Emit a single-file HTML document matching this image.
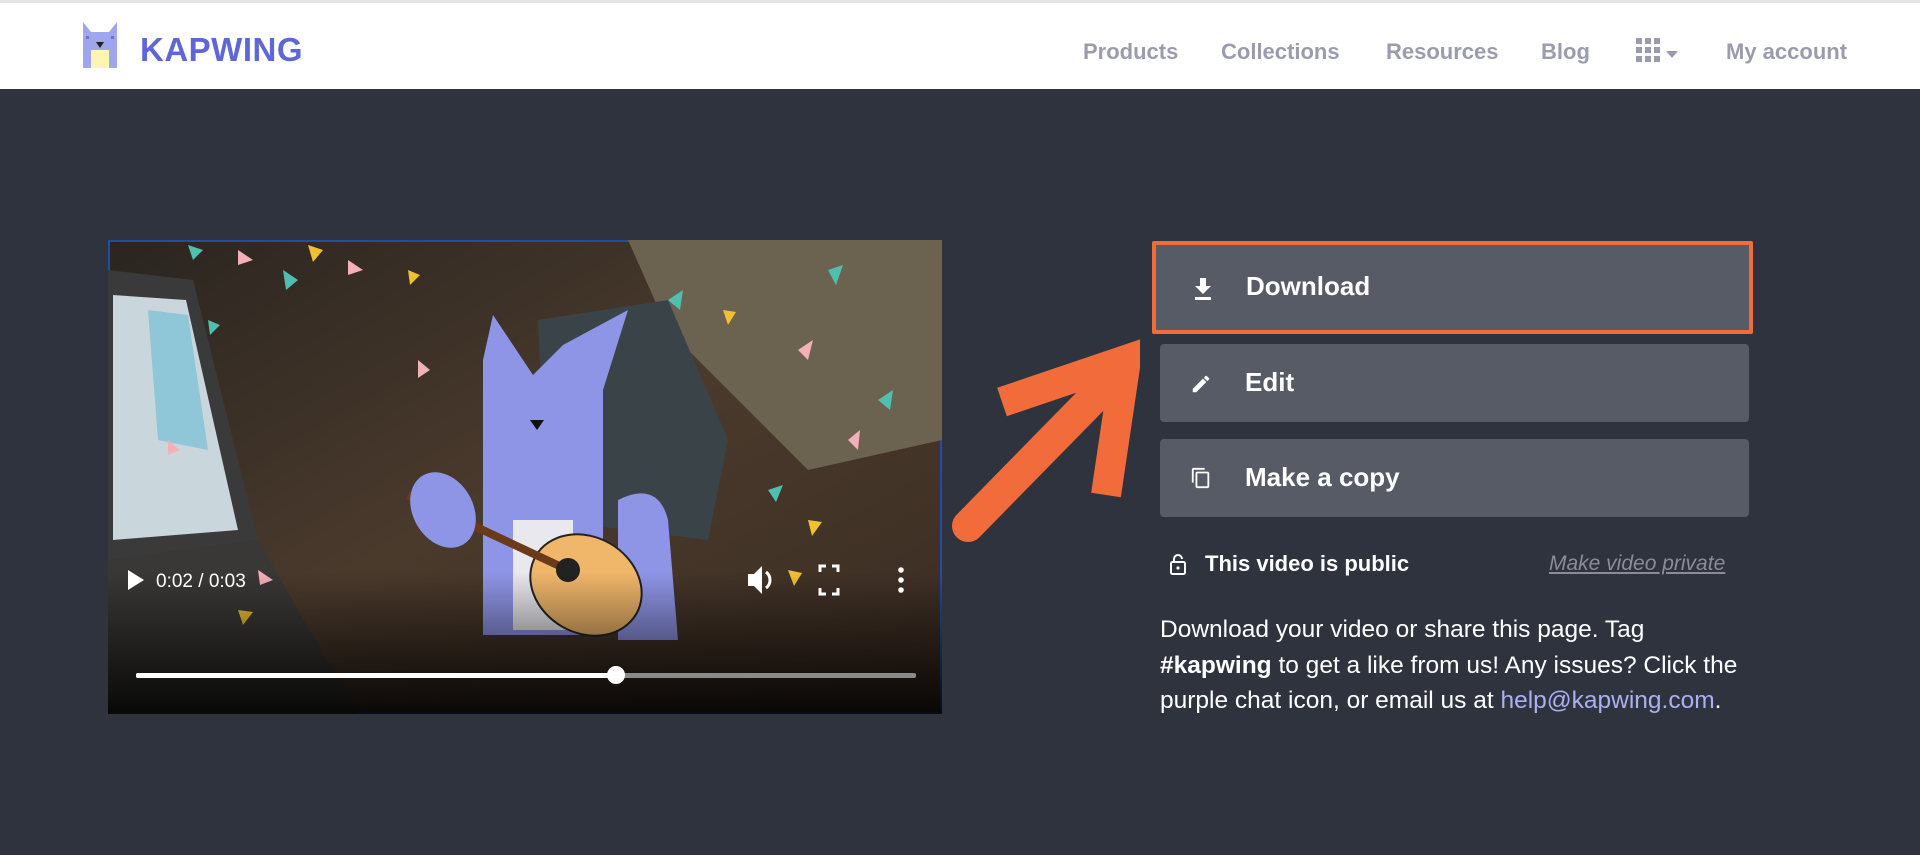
<!DOCTYPE html>
<html><head><meta charset="utf-8"><style>
*{margin:0;padding:0;box-sizing:border-box}
body{width:1920px;height:855px;background:#2f333e;font-family:"Liberation Sans",sans-serif;overflow:hidden;position:relative}
.hdr{position:absolute;left:0;top:0;width:1920px;height:89px;background:#fff;border-top:3px solid #e4e4e4}
.logo{position:absolute;left:140px;top:28px;font-size:33px;font-weight:bold;color:#5f67d8;letter-spacing:0.5px}
.nav{position:absolute;top:36px;font-size:22px;color:#9a9cad;font-weight:bold}
.btn{position:absolute;left:1160px;width:589px;background:#575b66;border-radius:4px;color:#fff;font-size:26px;font-weight:bold}
.btn span{position:absolute;left:85px}
.btn svg{position:absolute;left:30px}
.para{position:absolute;left:1160px;top:612px;width:600px;font-size:24.5px;line-height:35.5px;color:#fff}
</style></head><body>
<div class="hdr">
 <svg style="position:absolute;left:83px;top:19px" width="34" height="46" viewBox="0 0 34 46">
  <polygon points="0,0 8,10 26,10 34,0 34,46 0,46" fill="#9fa6ee"/>
  <rect x="8" y="28" width="18" height="18" fill="#fdf5b0"/>
  <polygon points="13,20 21,20 17,26" fill="#222"/>
  <rect x="3" y="14" width="3" height="3" fill="#6a70d6"/><rect x="28" y="14" width="3" height="3" fill="#6a70d6"/>
 </svg>
 <div class="logo">KAPWING</div>
 <div class="nav" style="left:1083px">Products</div>
 <div class="nav" style="left:1221px">Collections</div>
 <div class="nav" style="left:1386px">Resources</div>
 <div class="nav" style="left:1541px">Blog</div>
 <svg style="position:absolute;left:1636px;top:35px" width="52" height="26"><g fill="#9a9cad"><rect x="0" y="0" width="6" height="6"/><rect x="9" y="0" width="6" height="6"/><rect x="18" y="0" width="6" height="6"/><rect x="0" y="9" width="6" height="6"/><rect x="9" y="9" width="6" height="6"/><rect x="18" y="9" width="6" height="6"/><rect x="0" y="18" width="6" height="6"/><rect x="9" y="18" width="6" height="6"/><rect x="18" y="18" width="6" height="6"/><polygon points="30,13 42,13 36,20"/></g></svg>
 <div class="nav" style="left:1726px">My account</div>
</div>

<svg style="position:absolute;left:108px;top:240px" width="834" height="474" viewBox="0 0 834 474">
 <defs><linearGradient id="bg" x1="0" y1="0" x2="1" y2="1"><stop offset="0" stop-color="#2a2520"/><stop offset="0.5" stop-color="#4a3a2c"/><stop offset="1" stop-color="#3a2c22"/></linearGradient>
 <linearGradient id="fade" x1="0" y1="0" x2="0" y2="1"><stop offset="0.7" stop-color="#000" stop-opacity="0"/><stop offset="1" stop-color="#000" stop-opacity="0.85"/></linearGradient></defs>
 <rect width="834" height="474" fill="url(#bg)" stroke="#1f4fa0" stroke-width="4"/>
 <polygon points="520,0 834,0 834,200 700,230 560,90" fill="#6b6350"/>
 <polygon points="430,80 560,60 620,200 600,300 440,280" fill="#3a4448"/>
 <polygon points="0,30 85,40 150,300 0,320" fill="#3a3a3a"/>
 <polygon points="5,55 78,60 130,290 5,300" fill="#c9d6dc"/>
 <polygon points="40,70 80,75 100,210 50,200" fill="#8fc6d8"/>
 <polygon points="0,320 150,300 250,474 0,474" fill="#3a3836"/>
 <!-- cat -->
 <polygon points="385,75 425,135 455,105 520,70 495,150 495,395 375,395 375,120" fill="#8f95e6"/>
 <path d="M510,260 q40,-20 50,20 l10,120 h-60z" fill="#8f95e6"/>
 <rect x="405" y="280" width="60" height="110" fill="#e8e8ee"/>
 <ellipse cx="478" cy="345" rx="58" ry="48" fill="#f0b66a" stroke="#222" stroke-width="2" transform="rotate(30 478 345)"/>
 <line x1="300" y1="255" x2="460" y2="330" stroke="#6a3a1a" stroke-width="8"/>
 <circle cx="460" cy="330" r="12" fill="#222"/>
 <ellipse cx="335" cy="270" rx="30" ry="40" fill="#8f95e6" transform="rotate(-30 335 270)"/>
 <polygon points="422,180 436,180 429,190" fill="#111"/>
 <!-- confetti -->
 <g fill="#4fc0b0"><polygon points="80,5 95,10 85,20"/><polygon points="175,30 190,40 178,50"/><polygon points="560,60 575,50 572,70"/><polygon points="720,30 735,25 728,45"/><polygon points="770,160 785,150 782,170"/><polygon points="100,80 112,85 102,95"/><polygon points="660,250 675,245 668,262"/></g>
 <g fill="#f4b0b8"><polygon points="130,10 145,20 130,25"/><polygon points="240,20 255,30 240,35"/><polygon points="310,120 322,130 310,138"/><polygon points="690,110 705,100 700,120"/><polygon points="740,200 752,190 750,210"/><polygon points="150,330 165,340 152,345"/><polygon points="60,200 72,210 60,215"/></g>
 <g fill="#f0c030"><polygon points="200,5 215,10 205,22"/><polygon points="300,30 312,35 302,45"/><polygon points="700,280 714,282 704,296"/><polygon points="130,370 145,372 135,385"/><polygon points="615,70 628,72 620,85"/><polygon points="680,330 694,333 686,346"/></g>
 <rect width="834" height="474" fill="url(#fade)"/>
 <polygon points="20,330 20,350 36,340" fill="#fff"/>
 <text x="48" y="347" font-size="19" fill="#fff" font-family="Liberation Sans">0:02 / 0:03</text>
 <g fill="#fff"><polygon points="640,334 646,334 654,326 654,354 646,346 640,346"/><path d="M658,332 a10,10 0 0 1 0,16" stroke="#fff" stroke-width="3" fill="none"/>
 <path d="M712,332 v-6 h6 M724,326 h6 v6 M730,348 v6 h-6 M718,354 h-6 v-6" stroke="#fff" stroke-width="3" fill="none"/>
 <circle cx="793" cy="330" r="2.8"/><circle cx="793" cy="340" r="2.8"/><circle cx="793" cy="350" r="2.8"/></g>
 <rect x="28" y="433" width="780" height="5" fill="#8a8a8a" rx="2"/>
 <rect x="28" y="433" width="480" height="5" fill="#fff" rx="2"/>
 <circle cx="508" cy="435" r="9" fill="#fff"/>
</svg>

<svg style="position:absolute;left:940px;top:330px" width="200" height="220"><polyline points="62,72 186,30 166,165" fill="none" stroke="#f26b3a" stroke-width="30" stroke-linejoin="miter"/><line x1="176" y1="45" x2="28" y2="196" stroke="#f26b3a" stroke-width="32" stroke-linecap="round"/></svg>

<div class="btn" style="left:1152px;top:241px;width:601px;height:93px;border:4px solid #f26b3a;border-radius:2px">
 <svg style="top:33px;left:38px" width="18" height="22" viewBox="0 0 18 22"><path d="M6 0h6v8h5l-8 8-8-8h5z M1 19h16v3H1z" fill="#fff"/></svg><span style="left:90px;top:26px">Download</span></div>
<div class="btn" style="top:344px;height:78px">
 <svg style="top:29px;left:30px" width="22" height="22" viewBox="0 0 24 24"><path d="M3 17.25V21h3.75L17.8 9.94l-3.75-3.75z M20.7 7.04a1 1 0 0 0 0-1.41l-2.34-2.34a1 1 0 0 0-1.41 0l-1.83 1.83 3.75 3.75z" fill="#fff"/></svg><span style="top:23px">Edit</span></div>
<div class="btn" style="top:439px;height:78px">
 <svg style="top:27px;left:30px" width="22" height="24" viewBox="0 0 24 24"><path d="M16 1H4c-1.1 0-2 .9-2 2v14h2V3h12V1zm3 4H8c-1.1 0-2 .9-2 2v14c0 1.1.9 2 2 2h11c1.1 0 2-.9 2-2V7c0-1.1-.9-2-2-2zm0 16H8V7h11v14z" fill="#fff"/></svg><span style="top:23px">Make a copy</span></div>

<svg style="position:absolute;left:1170px;top:553px" width="16" height="22" viewBox="0 0 16 22"><path d="M4 9V6a4 4 0 0 1 8 0" stroke="#fff" stroke-width="2" fill="none"/><rect x="1" y="9" width="14" height="12" rx="1.5" stroke="#fff" stroke-width="2" fill="none"/><circle cx="8" cy="15" r="1.6" fill="#fff"/></svg>
<div style="position:absolute;left:1205px;top:551px;font-size:22px;font-weight:bold;color:#fff">This video is public</div>
<div style="position:absolute;left:1549px;top:552px;font-size:21px;font-style:italic;color:#8a8d99;text-decoration:underline">Make video private</div>
<div class="para">Download your video or share this page. Tag <b>#kapwing</b> to get a like from us! Any issues? Click the purple chat icon, or email us at <span style="color:#aab0f0">help@kapwing.com</span>.</div>
</body></html>
